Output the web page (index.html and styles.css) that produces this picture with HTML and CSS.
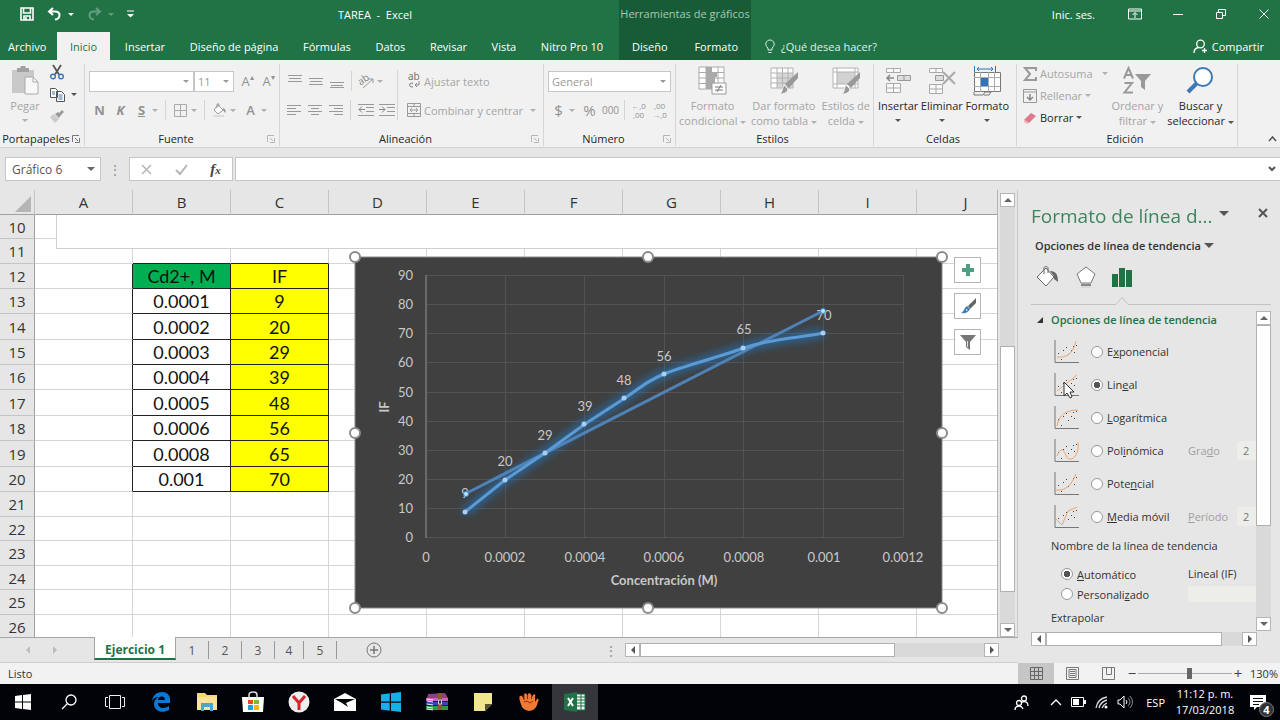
FILE: index.html
```html
<!DOCTYPE html>
<html lang="es">
<head>
<meta charset="utf-8">
<title>TAREA - Excel</title>
<link rel="stylesheet" href="styles.css">
</head>
<body>
<div class="app">

<header class="head">
  <div class="head-main">
    <div class="title-row">
      <button class="qb" aria-label="Guardar"><svg width="14" height="14" viewBox="0 0 14 14"><path d="M1 1h12v12H1zM3.500 1v5h7V1M4 13V9h6v4M6 13v-3" fill="none" stroke="#fff" stroke-width="1.600"/></svg></button>
      <button class="qb undo" aria-label="Deshacer"><svg width="15" height="14" viewBox="0 0 15 14"><path d="M6 1L2 4.500 6 8M2 4.500h6c6 0 6 7 0 8" fill="none" stroke="#fff" stroke-width="2"/></svg><i class="caret"></i></button>
      <button class="qb redo" aria-label="Rehacer"><svg width="15" height="14" viewBox="0 0 15 14"><path d="M9 1l4 3.500L9 8M13 4.500H7c-6 0-6 7 0 8" fill="none" stroke="#fff" stroke-width="2"/></svg><i class="caret"></i></button>
      <button class="qb" aria-label="Personalizar"><svg width="7" height="8" viewBox="0 0 7 8"><path d="M0 1h7" stroke="#fff"/><path d="M0 4h7L3.500 7.500z" fill="#fff"/></svg></button>
      <span class="doc">TAREA &nbsp;-&nbsp; Excel</span>
    </div>
    <nav class="tabs">
      <button>Archivo</button><button class="on">Inicio</button><button>Insertar</button><button>Diseño de página</button><button>Fórmulas</button><button>Datos</button><button>Revisar</button><button>Vista</button><button>Nitro Pro 10</button>
    </nav>
  </div>
  <div class="head-ctx">
    <span class="ctx-title">Herramientas de gráficos</span>
    <nav class="tabs"><button>Diseño</button><button>Formato</button></nav>
  </div>
  <div class="head-end">
    <div class="win">
      <button class="login">Inic. ses.</button>
      <button aria-label="Opciones de cinta"><svg width="14" height="12" viewBox="0 0 14 12"><path d="M.5 1h13v10H.5zM.5 3h13M7 10V5M4.500 7L7 4.500 9.500 7" fill="none" stroke="#fff"/></svg></button>
      <button aria-label="Minimizar"><svg width="10" height="10"><path d="M0 5.500h10" stroke="#fff"/></svg></button>
      <button aria-label="Restaurar"><svg width="10" height="10"><path d="M.5 3.500h6v6h-6zM2.500 3V.5h7v6H7" fill="none" stroke="#fff"/></svg></button>
      <button aria-label="Cerrar"><svg width="10" height="10"><path d="M.5.500l9 9M9.500.500l-9 9" stroke="#fff"/></svg></button>
    </div>
    <div class="tell">
      <button><svg width="10" height="15" viewBox="0 0 10 15"><path d="M3 11V9C-1 6 1 1 5 1s6 5 2 8v2zM3.500 13.500h3" fill="none" stroke="#dff0e5"/></svg>¿Qué desea hacer?</button>
      <button class="share"><svg width="15" height="15" viewBox="0 0 15 15"><circle cx="7.500" cy="5" r="3.800" fill="none" stroke="#fff" stroke-width="1.300"/><path d="M1 14c0-3 2-5 4.500-5.500M11.500 9v5M9 11.500h5" fill="none" stroke="#fff" stroke-width="1.300"/></svg>Compartir</button>
    </div>
  </div>
</header>

<section class="ribbon">
  <div class="group g-clip">
    <div class="body">
      <button class="big dim paste"><svg width="27" height="30" viewBox="0 0 27 30"><path d="M0 4h22v23H0z" fill="#c9c9c9"/><path d="M5 2h3l1-2h4l1 2h3v4H5z" fill="#a2a2a2"/><path d="M13 11h8l5 5v12H13z" fill="#f8f8f8" stroke="#aaa"/><path d="M21 11v5h5" fill="none" stroke="#aaa"/></svg><span>Pegar</span><i class="caret"></i></button>
      <div class="stack">
        <button aria-label="Cortar"><svg width="14" height="15" viewBox="0 0 14 15"><path d="M3 0l6 9.500M11 0L5 9.500" stroke="#555" stroke-width="1.800"/><circle cx="3" cy="11.500" r="2.300" fill="none" stroke="#3b78b5" stroke-width="1.400"/><circle cx="11" cy="11.500" r="2.300" fill="none" stroke="#3b78b5" stroke-width="1.400"/></svg></button>
        <button aria-label="Copiar"><svg width="15" height="14" viewBox="0 0 15 14"><path d="M.5.500h5l2 2v7h-7zM6.500 3.500h5l3 3v7h-8z" fill="#fff" stroke="#555"/><path d="M2 4h3M2 6h3M8.500 7h4M8.500 9h4M8.500 11h4" stroke="#3b78b5"/></svg><i class="caret dark"></i></button>
        <button aria-label="Copiar formato"><svg width="14" height="13" viewBox="0 0 14 13"><path d="M0 7l4-3 5 5-4 4z" fill="#ccc"/><path d="M5 4l3-2 3 3-2 3zM9 3l3-3 2 2-3 3z" fill="#999"/></svg></button>
      </div>
    </div>
    <div class="label"><span>Portapapeles</span><svg class="launch"><use href="#launch"/></svg></div>
  </div>

  <div class="group g-font">
    <div class="body rows">
      <div class="row">
        <span class="sel w-font"><select aria-label="Fuente" disabled><option></option></select></span><span class="sel w-size"><select aria-label="Tamaño" disabled><option>11</option></select></span>
        <button class="ic grow" aria-label="Aumentar tamaño">A<sup>▴</sup></button><button class="ic shrink" aria-label="Disminuir tamaño">A<sup>▾</sup></button>
      </div>
      <div class="row">
        <button class="ic b">N</button><button class="ic b it">K</button><button class="ic b ul">S</button><i class="caret"></i><i class="vs"></i>
        <button class="ic" aria-label="Bordes"><svg width="13" height="13"><path d="M.5.500h12v12H.5zM6.500 0v13M0 6.500h13" fill="none" stroke="#aaa"/></svg></button><i class="caret"></i><i class="vs"></i>
        <button class="ic" aria-label="Relleno"><svg width="15" height="15" viewBox="0 0 15 15"><path d="M6 2l5 5-5 4-4-4zM5 5V1h2v3" fill="#fff" stroke="#999"/><path d="M11 5c3 1 3 3 2 5l-2-3z" fill="#999"/><path d="M1 12h11v2H1z" fill="#ddd"/></svg></button><i class="caret"></i>
        <button class="ic fa">A</button><i class="caret"></i>
      </div>
    </div>
    <div class="label"><span>Fuente</span><svg class="launch soft"><use href="#launch"/></svg></div>
  </div>

  <div class="group g-align">
    <div class="body">
      <div class="rows al">
        <div class="row">
          <button class="ic" aria-label="Arriba"><svg class="i14"><path d="M0 1.500h14M1 4.500h12M0 7.500h14" stroke="#999"/></svg></button><button class="ic" aria-label="Medio"><svg class="i14"><path d="M0 4.500h14M1 7.500h12M0 10.500h14" stroke="#999"/></svg></button><button class="ic" aria-label="Abajo"><svg class="i14"><path d="M0 8.500h14M1 11.500h12M0 13.500h14" stroke="#999"/></svg></button><i class="vs"></i>
          <button class="ic" aria-label="Orientación"><svg width="16" height="15" viewBox="0 0 16 15"><text x="0" y="9" font-size="10" font-family="Noto Sans" fill="#888" transform="rotate(-35 5 8)">ab</text><path d="M4 14L14 5M10 5h4v4" fill="none" stroke="#999"/></svg></button><i class="caret"></i>
        </div>
        <div class="row">
          <button class="ic" aria-label="Izquierda"><svg class="i14"><path d="M0 2.500h14M0 5.500h9M0 8.500h14M0 11.500h9" stroke="#999"/></svg></button><button class="ic" aria-label="Centrar"><svg class="i14"><path d="M0 2.500h14M3 5.500h8M0 8.500h14M3 11.500h8" stroke="#999"/></svg></button><button class="ic" aria-label="Derecha"><svg class="i14"><path d="M0 2.500h14M5 5.500h9M0 8.500h14M5 11.500h9" stroke="#999"/></svg></button><i class="vs"></i>
          <button class="ic" aria-label="Disminuir sangría"><svg width="16" height="14"><path d="M0 1.500h16M8 4.500h8M8 8.500h8M0 12.500h16" stroke="#999"/><path d="M7 6.500H1M4 3.500l-3 3 3 3" fill="none" stroke="#888"/></svg></button><button class="ic" aria-label="Aumentar sangría"><svg width="16" height="14"><path d="M0 1.500h16M8 4.500h8M8 8.500h8M0 12.500h16" stroke="#999"/><path d="M0 6.500h6M3 3.500l3 3-3 3" fill="none" stroke="#888"/></svg></button>
        </div>
      </div>
      <i class="vs tall"></i>
      <div class="rows wrapcol">
        <div class="row"><button class="txt"><svg width="14" height="16" viewBox="0 0 14 16"><text x="1" y="7" font-size="10" font-family="Noto Sans" fill="#777">ab</text><path d="M6 10.500c-4-2-5 4 0 3.500" fill="none" stroke="#777"/><path d="M12 8v4H8M10 10l-2 2 2 2" fill="none" stroke="#888"/></svg>Ajustar texto</button></div>
        <div class="row"><button class="txt"><svg width="14" height="14"><path d="M.5.500h13v13H.5zM0 3.500h14M0 10.500h14M7 0v3M7 11v3M3 7h8M5 5L3 7l2 2M9 5l2 2-2 2" fill="none" stroke="#999"/></svg>Combinar y centrar<i class="caret"></i></button></div>
      </div>
    </div>
    <div class="label"><span>Alineación</span><svg class="launch soft"><use href="#launch"/></svg></div>
  </div>

  <div class="group g-num">
    <div class="body rows">
      <div class="row"><span class="sel w-num"><select aria-label="Formato de número" disabled><option>General</option></select></span></div>
      <div class="row">
        <button class="ic sym">$</button><i class="caret"></i><button class="ic sym pc">%</button><button class="ic mil">000</button><i class="vs"></i>
        <button class="ic dec" aria-label="Aumentar decimales"><span>←,0</span><span>,00</span></button><button class="ic dec" aria-label="Disminuir decimales"><span>,00</span><span>→,0</span></button>
      </div>
    </div>
    <div class="label"><span>Número</span><svg class="launch soft"><use href="#launch"/></svg></div>
  </div>

  <div class="group g-style">
    <div class="body">
      <button class="big dim"><svg width="30" height="30" viewBox="0 0 30 30"><path d="M1 1h25v22H1z" fill="#fff"/><path d="M8 1h5v22H8zM13 6h6v5h-6zM13 11h4v6h-4z" fill="#aaa"/><path d="M1 1h25v22H1zM1 6.500h25M1 12h25M1 17.500h25M8 1v22M13.500 1v22M20 1v22" fill="none" stroke="#aaa"/><path d="M14 17h14v11H14z" fill="#fff" stroke="#999"/><path d="M17 21h8M17 24h8M23 19l-4 7" stroke="#777"/></svg><span>Formato<br>condicional <i class="caret"></i></span></button>
      <button class="big dim"><svg width="30" height="30" viewBox="0 0 30 30"><path d="M2 2h22v20H2z" fill="#fff"/><path d="M8 7h16v15H8z" fill="#d6d6d6"/><path d="M2 2h22v20H2zM2 7h22M2 12h22M2 17h22M8 2v20M13.500 2v20M19 2v20" fill="none" stroke="#b2b2b2"/><path d="M29 6v6l-9 10-4-4z" fill="#999"/><path d="M15 19l4 4c-1 4-4 5-8 5 3-2 2-7 4-9z" fill="#999" stroke="#f1f1f1"/></svg><span>Dar formato<br>como tabla <i class="caret"></i></span></button>
      <button class="big dim"><svg width="30" height="30" viewBox="0 0 30 30"><path d="M2 2h25v20H2z" fill="#fff"/><path d="M6 6h18v12H6z" fill="#d2d2d2"/><path d="M2 2h25v20H2zM2 6h25M2 18h25M6 2v20M24 2v20" fill="none" stroke="#b2b2b2"/><path d="M29 6v6l-9 10-4-4z" fill="#999"/><path d="M15 19l4 4c-1 4-4 5-8 5 3-2 2-7 4-9z" fill="#999" stroke="#f1f1f1"/></svg><span>Estilos de<br>celda <i class="caret"></i></span></button>
    </div>
    <div class="label"><span>Estilos</span></div>
  </div>

  <div class="group g-cell">
    <div class="body">
      <button class="big"><svg width="28" height="30" viewBox="0 0 28 30"><path d="M2.500 2.500h14v4h-14zM9.500 2v5M2.500 17.500h14v9h-14zM9.500 17v9M2 22h15" fill="#f8f8f8" stroke="#aaa"/><path d="M13.500 9.500h13v5h-13zM20 9v6" fill="#ddd" stroke="#999"/><path d="M10 12H3M6 9l-3 3 3 3" fill="none" stroke="#888" stroke-width="1.500"/></svg><span>Insertar</span><i class="caret dark"></i></button>
      <button class="big"><svg width="28" height="30" viewBox="0 0 28 30"><path d="M1.500 2.500h13v4h-13zM8 2v5M1.500 18.500h13v9h-13zM8 18v9M1 23h14" fill="#f8f8f8" stroke="#aaa"/><path d="M7.500 9.500h8v5h-8z" fill="#ddd" stroke="#999"/><path d="M15 6l12 12M27 6L15 18" stroke="#aaa" stroke-width="2"/></svg><span>Eliminar</span><i class="caret dark"></i></button>
      <button class="big"><svg width="28" height="30" viewBox="0 0 28 30"><path d="M1.500 6.500h26v19h-26z" fill="#fff" stroke="#777"/><path d="M1 11.500h26M1 20.500h26M7.500 6v20M15.500 6v20M21.500 6v20" stroke="#aaa"/><path d="M8 12h7v8H8z" fill="#2f75b8"/><path d="M1 26v3h9l2-3h6l-2 3h-5" fill="none" stroke="#777"/><path d="M1.500 0v6M22.500 0v6M4 3h16M6 1L4 3l2 2M18 1l2 2-2 2" fill="none" stroke="#2f75b8"/></svg><span>Formato</span><i class="caret dark"></i></button>
    </div>
    <div class="label"><span>Celdas</span></div>
  </div>

  <div class="group g-edit">
    <div class="body">
      <div class="edits">
        <button class="txt"><svg width="14" height="14"><path d="M13 4V1H2l5 6-5 6h11v-3" fill="none" stroke="#999" stroke-width="2"/></svg>Autosuma<i class="caret far"></i></button>
        <button class="txt"><svg width="14" height="14"><path d="M.5.500h13v13H.5zM0 3h14" fill="none" stroke="#999"/><path d="M7 5v6M4 8l3 3 3-3" fill="none" stroke="#888" stroke-width="1.500"/></svg>Rellenar<i class="caret"></i></button>
        <button class="txt live"><svg width="14" height="14"><path d="M1 9l7-7 5 3-7 7z" fill="#e0788c"/><path d="M1 9l5 3-2 1-3-2z" fill="#f4b6c2"/></svg>Borrar<i class="caret dark"></i></button>
      </div>
      <button class="big dim"><svg width="28" height="30" viewBox="0 0 28 30"><path d="M1 12.500L5.500 2 10 12.500M2.500 9h6M1.500 17h7.500L1.500 26.500H10" fill="none" stroke="#999" stroke-width="2"/><path d="M12 8h16l-6 7v9l-4-3v-6z" fill="#999"/></svg><span>Ordenar y<br>filtrar <i class="caret"></i></span></button>
      <button class="big"><svg width="28" height="30" viewBox="0 0 28 30"><circle cx="17" cy="11" r="9" fill="#fff" stroke="#3b78b5" stroke-width="2"/><path d="M11 17L2 26" stroke="#3b78b5" stroke-width="4"/></svg><span>Buscar y<br>seleccionar <i class="caret dark"></i></span></button>
    </div>
    <div class="label"><span>Edición</span></div>
  </div>
  <button class="collapse" aria-label="Contraer"><svg width="9" height="6"><path d="M1 5l3.500-4L8 5" fill="none" stroke="#555" stroke-width="1.500"/></svg></button>
</section>

<section class="fbar">
  <span class="sel namebox"><input aria-label="Cuadro de nombres" value="Gráfico 6"></span>
  <i class="dots">⋮</i>
  <div class="fx">
    <button aria-label="Cancelar"><svg width="11" height="11"><path d="M1 1l9 9M10 1l-9 9" stroke="#b5b5b5" stroke-width="1.500"/></svg></button>
    <button aria-label="Introducir"><svg width="13" height="11"><path d="M1 6l4 4 7-9" fill="none" stroke="#b5b5b5" stroke-width="2"/></svg></button>
    <button class="fxb"><em>f</em><small>x</small></button>
  </div>
  <div class="fin"><input aria-label="Barra de fórmulas"><svg width="8" height="6"><path d="M1 1l3 3 3-3" fill="none" stroke="#555" stroke-width="2"/></svg></div>
</section>

<main class="work">
  <div class="left">
    <div class="sheetwrap">
      <div class="sheet">
        <table>
          <colgroup><col class="c0"><col><col><col><col><col><col><col><col><col><col></colgroup>
          <thead><tr><th class="corner"><svg width="16" height="16"><path d="M16 0v16H0z" fill="#b5b5b5"/></svg></th><th>A<th>B<th>C<th>D<th>E<th>F<th>G<th>H<th>I<th>J</tr></thead>
          <tbody>
          <tr class="r24"><th>10<td><td><td><td><td><td><td><td><td><td></tr>
          <tr class="r25"><th>11<td><td class="ub"><td class="ub"><td><td><td><td><td><td><td></tr>
          <tr class="r25"><th>12<td class="rb"><td class="k g">Cd2+, M<td class="k y">IF<td><td><td><td><td><td><td></tr>
          <tr class="r25"><th>13<td class="rb"><td class="k">0.0001<td class="k y">9<td><td><td><td><td><td><td></tr>
          <tr class="r26"><th>14<td class="rb"><td class="k">0.0002<td class="k y">20<td><td><td><td><td><td><td></tr>
          <tr class="r25"><th>15<td class="rb"><td class="k">0.0003<td class="k y">29<td><td><td><td><td><td><td></tr>
          <tr class="r25"><th>16<td class="rb"><td class="k">0.0004<td class="k y">39<td><td><td><td><td><td><td></tr>
          <tr class="r26"><th>17<td class="rb"><td class="k">0.0005<td class="k y">48<td><td><td><td><td><td><td></tr>
          <tr class="r25"><th>18<td class="rb"><td class="k">0.0006<td class="k y">56<td><td><td><td><td><td><td></tr>
          <tr class="r26"><th>19<td class="rb"><td class="k">0.0008<td class="k y">65<td><td><td><td><td><td><td></tr>
          <tr class="r25"><th>20<td class="rb"><td class="k">0.001<td class="k y">70<td><td><td><td><td><td><td></tr>
          <tr class="r25"><th>21<td><td><td><td><td><td><td><td><td><td></tr>
          <tr class="r24"><th>22<td><td><td><td><td><td><td><td><td><td></tr>
          <tr class="r25"><th>23<td><td><td><td><td><td><td><td><td><td></tr>
          <tr class="r24"><th>24<td><td><td><td><td><td><td><td><td><td></tr>
          <tr class="r25"><th>25<td><td><td><td><td><td><td><td><td><td></tr>
          <tr class="r24"><th>26<td><td><td><td><td><td><td><td><td><td></tr>
          </tbody>
        </table>
        <div class="upper-object"></div>
        <svg class="chart" viewBox="355 257 587 351" role="img" aria-label="Gráfico 6">
          <defs><filter id="glow" x="-20%" y="-20%" width="140%" height="140%"><feGaussianBlur stdDeviation="4"/></filter></defs>
          <rect x="355" y="257" width="587" height="351" fill="#404040" stroke="#8a8a8a"/>
          <path d="M426 275.500h477M426 304.500h477M426 333.500h477M426 362.500h477M426 392.500h477M426 421.500h477M426 450.500h477M426 479.500h477M426 508.500h477M426 537.500h477M505.500 275v262M584.500 275v262M664.500 275v262M743.500 275v262M823.500 275v262M903.500 275v262" stroke="#535353" fill="none"/>
          <path d="M426 275v263" stroke="#6a6a6a" stroke-width="2"/>
          <g class="axis" text-anchor="end"><text x="413" y="280">90</text><text x="413" y="309">80</text><text x="413" y="338">70</text><text x="413" y="367">60</text><text x="413" y="397">50</text><text x="413" y="426">40</text><text x="413" y="455">30</text><text x="413" y="484">20</text><text x="413" y="513">10</text><text x="413" y="542">0</text></g>
          <g class="axis" text-anchor="middle"><text x="426" y="562">0</text><text x="505" y="562">0.0002</text><text x="585" y="562">0.0004</text><text x="664" y="562">0.0006</text><text x="744" y="562">0.0008</text><text x="824" y="562">0.001</text><text x="903" y="562">0.0012</text>
          <text class="ttl" x="664" y="585">Concentración (M)</text><text class="ttl" transform="translate(389 407) rotate(-90)">IF</text></g>
          <path d="M465 512L505 480L545 453L585 424L625 398C645 384 650 380 664 374S715 358 744 348S800 338 823 333" fill="none" stroke="#1f7fd6" stroke-width="8" filter="url(#glow)" opacity=".65"/>
          <g class="axis" text-anchor="middle"><text x="465" y="498">9</text><text x="505" y="466">20</text><text x="545" y="440">29</text><text x="585" y="411">39</text><text x="624" y="385">48</text><text x="664" y="361">56</text><text x="744" y="334">65</text><text x="824" y="320">70</text></g>
          <path d="M465 494L823 311" stroke="#4f83b8" stroke-width="3"/>
          <path d="M465 512L505 480L545 453L585 424L625 398C645 384 650 380 664 374S715 358 744 348S800 338 823 333" fill="none" stroke="#5b9bd5" stroke-width="3"/>
          <g fill="#a5cff5"><circle cx="465" cy="512" r="2.500"/><circle cx="505" cy="480" r="2.500"/><circle cx="545" cy="453" r="2.500"/><circle cx="584" cy="424" r="2.500"/><circle cx="624" cy="398" r="2.500"/><circle cx="664" cy="374" r="2.500"/><circle cx="743" cy="348" r="2.500"/><circle cx="823" cy="333" r="2.500"/></g>
          <g fill="#bfe2ff" stroke="#2f8fdf"><circle cx="466" cy="494" r="2.500"/><circle cx="823" cy="311" r="2.500"/></g>
          <g fill="#fff" stroke="#8b8b8b" stroke-width="2"><circle cx="355" cy="257" r="5"/><circle cx="648" cy="257" r="5"/><circle cx="942" cy="257" r="5"/><circle cx="355" cy="433" r="5"/><circle cx="942" cy="433" r="5"/><circle cx="355" cy="608" r="5"/><circle cx="648" cy="608" r="5"/><circle cx="942" cy="608" r="5"/></g>
        </svg>
        <div class="ctools">
          <button aria-label="Elementos"><svg width="14" height="14"><path d="M7 1v12M1 7h12" stroke="#4fa083" stroke-width="4"/></svg></button>
          <button aria-label="Estilos"><svg width="18" height="18"><path d="M17 1v5l-6 6-2-3z" fill="#666"/><path d="M8 9l3 3c-2 4-6 5-9 4 3-1 3-5 6-7z" fill="#3b78b5"/><path d="M7 12l2 1-2 1z" fill="#fff"/></svg></button>
          <button aria-label="Filtros"><svg width="18" height="18"><path d="M1 2h16l-6 7v8l-4-3V9z" fill="#777"/><path d="M8.500 8v6" stroke="#ddd"/></svg></button>
        </div>
      </div>
      <div class="vsb"><button aria-label="Subir"><i class="tri up"></i></button><div class="track"><i class="thumb vt1"></i></div><button aria-label="Bajar"><i class="tri down"></i></button></div>
    </div>
    <div class="sheettabs">
      <button class="nav" aria-label="Hoja anterior"><i class="tri lf pale"></i></button><button class="nav" aria-label="Hoja siguiente"><i class="tri rt pale"></i></button>
      <button class="tab cur">Ejercicio 1</button><button class="tab">1</button><button class="tab">2</button><button class="tab">3</button><button class="tab narrow">4</button><button class="tab">5</button>
      <button class="add" aria-label="Hoja nueva"><svg width="16" height="16"><circle cx="8" cy="8" r="7" fill="none" stroke="#777"/><path d="M8 4v8M4 8h8" stroke="#777" stroke-width="1.500"/></svg></button>
      <i class="dots split">⋮</i>
      <div class="hsb"><button aria-label="Izquierda"><i class="tri lf"></i></button><div class="track"><i class="thumb ht1"></i></div><button aria-label="Derecha"><i class="tri rt"></i></button></div>
    </div>
  </div>

  <aside class="pane">
    <div class="ptitle"><h2>Formato de línea d...</h2><button aria-label="Menú"><i class="caret dark xl"></i></button><button class="px" aria-label="Cerrar panel"><svg width="10" height="10"><path d="M1 1l8 8M9 1L1 9" stroke="#555" stroke-width="2"/></svg></button></div>
    <button class="psub">Opciones de línea de tendencia <i class="caret dark xl"></i></button>
    <div class="picons">
      <button aria-label="Relleno y línea"><svg width="24" height="22" viewBox="0 0 24 22"><path d="M10 2l8 9-8 9-9-9z" fill="#fff" stroke="#666"/><path d="M8 8V2c0-2 4-2 4 0v5" fill="none" stroke="#666"/><path d="M14 5c7 0 8 5 8 11l-4-3v-3z" fill="#666"/></svg></button>
      <button aria-label="Efectos"><svg width="22" height="22" viewBox="0 0 22 22"><path d="M11 1l9 7-4 9H6L2 8z" fill="#fff" stroke="#777"/><path d="M6 19h10" stroke="#888" stroke-width="2"/><path d="M6 21h10" stroke="#ccc"/></svg></button>
      <button aria-label="Opciones"><svg width="20" height="20"><path d="M0 7h6v13H0zM7 1h6v19H7zM14 3h6v17h-6z" fill="#217346"/></svg></button>
    </div>
    <svg class="notch" viewBox="0 0 240 8" preserveAspectRatio="xMinYMin slice"><path d="M0 7.500h85l6-7 6 7h143" fill="none" stroke="#c3c3c3"/></svg>
    <div class="pbody">
      <form class="opts">
        <h3><i class="fold"></i>Opciones de línea de tendencia</h3>
        <div class="opt"><svg><use href="#axes"/><path d="M3 17c9 1 16-3 19-16" class="cv"/></svg><label><input type="radio" name="t"><span>E<u>x</u>ponencial</span></label></div>
        <div class="opt"><svg><use href="#axes"/><path d="M3 18L23 2" class="cv"/></svg><label><input type="radio" name="t" checked><span>Lin<u>e</u>al</span></label>
          <svg class="cursor" width="12" height="18"><path d="M1 1v14l3-3 3 5 2-1-2-5h4z" fill="#fff" stroke="#333"/></svg></div>
        <div class="opt"><svg><use href="#axes"/><path d="M3 20C5 9 12 4 24 4" class="cv"/></svg><label><input type="radio" name="t"><span><u>L</u>ogarítmica</span></label></div>
        <div class="opt"><svg><use href="#axes"/><path d="M3 17c3-8 7-8 9 0 3 7 14 2 12-14" class="cv"/></svg><label><input type="radio" name="t"><span>Pol<u>i</u>nómica</span></label><label class="deg"><span>Gra<u>d</u>o</span> <input value="2" disabled></label></div>
        <div class="opt"><svg><use href="#axes"/><path d="M2 18c9 1 15-4 20-16" class="cv"/></svg><label><input type="radio" name="t"><span>Pote<u>n</u>cial</span></label></div>
        <div class="opt"><svg><use href="#axes"/><path d="M2 14l6 6 6-14 9-4" class="cv"/></svg><label><input type="radio" name="t"><span><u>M</u>edia móvil</span></label><label class="deg"><span><u>P</u>eríodo</span> <input value="2" disabled></label></div>
        <p class="nm">Nombre de la línea de tendencia</p>
        <div class="opt2"><label><input type="radio" name="n" checked><span><u>A</u>utomático</span></label><span class="val">Lineal (IF)</span></div>
        <div class="opt2"><label><input type="radio" name="n"><span>Personali<u>z</u>ado</span></label><input class="val" aria-label="Nombre" disabled></div>
        <p class="ex">Extrapolar</p>
      </form>
      <div class="vsb pv"><button aria-label="Subir"><i class="tri up"></i></button><div class="track"><i class="thumb vt2"></i></div><button aria-label="Bajar"><i class="tri down"></i></button></div>
    </div>
    <div class="hsb ph"><button aria-label="Izquierda"><i class="tri lf"></i></button><div class="track"><i class="thumb ht2"></i></div><button aria-label="Derecha"><i class="tri rt"></i></button></div>
  </aside>
</main>

<footer class="status">
  <span class="ready">Listo</span>
  <button class="view on" aria-label="Normal"><svg width="13" height="13"><path d="M.5.500h12v12H.5zM4.500 0v13M8.500 0v13M0 4.500h13M0 8.500h13" fill="none" stroke="#666"/></svg></button>
  <button class="view" aria-label="Diseño"><svg width="13" height="13"><path d="M.5.500h12v12H.5zM3 2.500h7v8H3zM4 4.500h5M4 6.500h5M4 8.500h5" fill="none" stroke="#777"/></svg></button>
  <button class="view" aria-label="Saltos"><svg width="13" height="13"><path d="M.5.500h12v12H.5zM4.500 0v7.500h5V0" fill="none" stroke="#777"/></svg></button>
  <button class="zb">−</button><input class="zoom" type="range" min="0" max="100" value="55" aria-label="Zoom"><button class="zb">+</button><span class="pct">130%</span>
</footer>

<div class="taskbar">
  <button aria-label="Inicio"><svg width="16" height="16" viewBox="0 0 16 16"><path d="M0 2l7-1v6.500H0zM8 1l8-1v7.500H8zM0 8.500h7V15l-7-1zM8 8.500h8V16l-8-1z" fill="#fff"/></svg></button>
  <button aria-label="Buscar"><svg width="16" height="16"><circle cx="10" cy="6" r="5" fill="none" stroke="#fff" stroke-width="1.300"/><path d="M6.500 9.500L1 15" stroke="#fff" stroke-width="1.300"/></svg></button>
  <button aria-label="Vista de tareas"><svg width="20" height="16"><path d="M4.500 1.500h11v13h-11zM3 3.500H.5v9H3M17 3.500h2.500v9H17" fill="none" stroke="#eee"/></svg></button>
  <button aria-label="Edge"><svg width="20" height="20" viewBox="0 0 20 20"><path d="M1 9C2 3 6 0 11 0c6 0 9 4 8 11H7c0 6 7 6 11 3v4c-7 4-15 1-15-6 0-3 2-6 5-7-4 0-6 2-7 4zm6-1h7c0-5-7-4-7 0z" fill="#0a78d4"/></svg></button>
  <button aria-label="Explorador"><svg width="22" height="20" viewBox="0 0 22 20"><path d="M1 1h8l2 2h10v15H1z" fill="#f8d775"/><path d="M1 5h20v13H1z" fill="#fbe39a"/><path d="M5 19v-8h12v8h-3v-4H8v4z" fill="#4aa8c9"/></svg></button>
  <button aria-label="Tienda"><svg width="22" height="22" viewBox="0 0 22 22"><path d="M0 6h22l-1 15H1z" fill="#fff"/><path d="M7 8V4c0-4 8-4 8 0v4" fill="none" stroke="#ddd" stroke-width="1.500"/><path d="M6 9h5v4H6z" fill="#e64a25"/><path d="M12 9h5v4h-5z" fill="#7db928"/><path d="M6 14h5v5H6z" fill="#1d9fe0"/><path d="M12 14h5v5h-5z" fill="#fbb316"/></svg></button>
  <button aria-label="Yandex"><svg width="22" height="22"><circle cx="11" cy="11" r="10.500" fill="#eee"/><path d="M5 5l6 7 6-7M11 11v8" fill="none" stroke="#d8232a" stroke-width="3"/></svg></button>
  <button aria-label="Correo"><svg width="24" height="20" viewBox="0 0 24 20"><path d="M1 7l11-6 11 6v12H1z" fill="#fff"/><path d="M2 7h20l-9 4 2 4-6-4z" fill="#000"/></svg></button>
  <button aria-label="Windows"><svg width="20" height="20" viewBox="0 0 16 16"><path d="M0 2l7-1v6.500H0zM8 1l8-1v7.500H8zM0 8.500h7V15l-7-1zM8 8.500h8V16l-8-1z" fill="#13b1e7"/></svg></button>
  <button aria-label="WinRAR"><svg width="22" height="18" viewBox="0 0 22 18"><path d="M2 1l17-1 3 5H1z" fill="#8a4283"/><path d="M0 5h22v3H0z" fill="#d25fb8"/><path d="M0 8h22v1H0z" fill="#222"/><path d="M0 9h22v3H0z" fill="#3348b0"/><path d="M0 12h22v1H0z" fill="#222"/><path d="M0 13h22v4H0z" fill="#2f9a45"/><path d="M1 6l6 1M1 8l6 1M1 11l6 1M1 14l6 1M1 16l6 1" stroke="#eee"/><path d="M12 0h4v17h-4z" fill="#8b5a33"/><path d="M12.500 7h3v4h-3z" fill="#333" stroke="#ccc"/></svg></button>
  <button aria-label="Notas"><svg width="18" height="18"><path d="M0 0h18v11l-7 7H0z" fill="#f0e68c"/><path d="M11 18v-7h7z" fill="#55532e"/></svg></button>
  <button aria-label="Garra"><svg width="20" height="18" viewBox="0 0 20 18"><path d="M1 3c2-1 3 1 4 4V2c0-2 3-2 3 0v4l1-5c1-1 3-1 3 1v4l2-4c2-2 3 0 2 2v5l2-3c3-1 1 3 0 6-3 8-12 7-15 2-1-3-4-10-2-11z" fill="#ee7a35"/><path d="M5 9l3-1 3 2 3-2M5 2v5M8.500 2v4M12.500 2v4" fill="none" stroke="#8a330b"/></svg></button>
  <button class="act" aria-label="Excel"><svg width="22" height="20" viewBox="0 0 22 20"><path d="M12 2h9v16h-9z" fill="#f3f7f4" stroke="#217346"/><path d="M12 5h9M12 8h9M12 11h9M12 14h9M17 2v16" stroke="#217346"/><path d="M0 2l13-2v20L0 18z" fill="#217346"/><path d="M4 6l5 8M9 6l-5 8" stroke="#fff" stroke-width="2"/></svg></button>
  <div class="tray">
    <svg class="people" width="15" height="15" viewBox="0 0 15 15"><g fill="none" stroke="#fff" stroke-width="1.300"><circle cx="10" cy="3.500" r="2.500"/><circle cx="5" cy="8" r="2.500"/><path d="M1 15c0-3 1-4 4-4s3 1 4 3M8 7c4-1 6 0 6 4"/></g></svg>
    <svg width="12" height="8"><path d="M1 7l5-5 5 5" fill="none" stroke="#fff" stroke-width="1.300"/></svg>
    <svg width="15" height="10"><path d="M.5.500h12v9H.5z" fill="none" stroke="#fff"/><path d="M2 2h6v6H2zM13 3h2v4h-2z" fill="#fff"/></svg>
    <svg width="13" height="13"><path d="M1 12C2 6 6 2 12 1M4 12c1-4 4-7 8-8M7 12c1-2 2-4 5-5" fill="none" stroke="#ddd" stroke-width="1.300"/><circle cx="11" cy="11" r="1.500" fill="#fff"/></svg>
    <svg width="17" height="14"><path d="M1 5h2l4-4v12L3 9H1zM9 5q2 2 0 4" fill="none" stroke="#fff"/><path d="M11 3q4 4 0 8M13 1q5 6 0 12" fill="none" stroke="#888"/></svg>
    <span class="lang">ESP</span>
    <span class="clock">11:12 p. m.<br>17/03/2018</span>
    <button class="note" aria-label="Notificaciones"><svg width="16" height="15"><path d="M0 0h16v12H7l-3 3v-3H0z" fill="#fff"/><path d="M3 3.500h10M3 6.500h10M3 9.500h6" stroke="#111"/></svg><b>4</b></button>
  </div>
</div>
</div>

<svg class="defs"><defs>
  <symbol id="launch" viewBox="0 0 8 8"><path d="M.5 7V.5H7M3 3l3 3M7.500 3v4.500H3" fill="none" stroke="currentColor"/></symbol>
  <symbol id="axes" viewBox="0 0 26 23"><path d="M1 0v22.500h24" fill="none" stroke="#777"/><path d="M4 13h1v1H4zM9 10h1v1H9zM14 14h1v1h-1zM19 6h1v1h-1zM17 10h1v1h-1zM7 19h1v1H7zM22 5h1v1h-1zM12 7h1v1h-1zM20 12h1v1h-1z" fill="#444"/></symbol>
</defs></svg>
</body>
</html>
```

FILE: styles.css
```css
* { box-sizing: border-box; }
body { margin: 0; font: 11px/15px "Open Sans", "Noto Sans", sans-serif; color: #262626; background: #e6e6e6; }
button { border: 0; padding: 0; margin: 0; background: none; font: inherit; color: inherit; display: inline-flex; align-items: center; justify-content: center; white-space: nowrap; }
input, select { font: inherit; color: inherit; border: 0; margin: 0; min-width: 0; }
svg { display: block; flex: none; overflow: visible; }
i { font-style: normal; }
.defs { position: absolute; width: 0; height: 0; }
.app { display: flex; flex-direction: column; height: 100vh; min-width: 1200px; overflow: hidden; }

.caret { display: inline-block; flex: none; border: 3px solid transparent; border-top-color: #b0b0b0; border-bottom: 0; vertical-align: middle; }
.caret.dark { border-top-color: #555; }
.caret.xl { border-width: 5px; border-bottom: 0; }
.tri { border: 4px solid transparent; }
.tri.up { border-bottom-color: #666; border-top: 0; }
.tri.down { border-top-color: #666; border-bottom: 0; }
.tri.lf { border-right-color: #555; border-left: 0; }
.tri.rt { border-left-color: #555; border-right: 0; }
.tri.lf.pale { border-right-color: #bdbdbd; }
.tri.rt.pale { border-left-color: #bdbdbd; }

/* Title bar and ribbon tabs */
.head { display: flex; height: 60px; flex: none; background: #217346; color: #fff; }
.head-main { flex: 0 0 619px; display: flex; flex-direction: column; }
.title-row { height: 32px; display: flex; align-items: center; padding: 0 0 4px 20px; gap: 13px; }
.qb { gap: 6px; }
.qb .caret { border-top-color: #fff; }
.redo { opacity: .3; }
.doc { flex: 1; text-align: center; padding-right: 16px; }
.tabs { height: 28px; display: flex; justify-content: space-between; padding-right: 6px; }
.tabs button { padding: 0 10px; }
.tabs button.on { padding: 0 13px; }
.head-main .tabs button:first-child { padding: 0 6px 0 8px; }
.tabs .on { background: #f1f1f1; color: #217346; }
.head-ctx { flex: 0 0 132px; background: #185c37; display: flex; flex-direction: column; }
.ctx-title { height: 32px; line-height: 28px; text-align: center; color: #a3cbb2; white-space: nowrap; }
.head-ctx .tabs { padding: 0; }
.head-ctx .tabs button { padding: 0 13px; }
.head-end { flex: 1; }
.win { height: 32px; padding-bottom: 4px; display: flex; justify-content: flex-end; align-items: center; }
.win button { width: 43px; height: 24px; }
.win .login { width: auto; margin-right: 18px; }
.win button:last-child { margin-right: -5px; }
.tell { height: 28px; padding: 0 16px 0 14px; display: flex; justify-content: space-between; color: #dff0e5; }
.tell button { gap: 6px; }
.tell .share { gap: 4px; color: #fff; }

/* Ribbon */
.ribbon { display: flex; flex: none; height: 88px; background: #f1f1f1; border-bottom: 1px solid #d0d0d0; padding-top: 4px; }
.group { flex: none; display: flex; flex-direction: column; height: 82px; border-right: 1px solid #d6d6d6; color: #262626; }
.g-clip { width: 85px; } .g-font { width: 195px; } .g-align { width: 264px; } .g-num { width: 132px; } .g-style { width: 198px; } .g-cell { width: 143px; } .g-edit { width: 221px; }
.body { flex: 1; display: flex; min-height: 0; }
.rows { display: flex; flex-direction: column; gap: 7px; padding-top: 6px; }
.row { display: flex; align-items: center; height: 22px; }
.label { height: 15px; display: flex; align-items: center; padding: 0 4px 0 0; }
.label span { flex: 1; text-align: center; }
.launch { width: 8px; height: 8px; color: #777; }
.launch.soft { color: #b5b5b5; }
.big { flex-direction: column; justify-content: flex-start; padding-top: 2px; }
.big span { margin-top: 2px; }
.big > .caret { margin-top: 6px; }
.dim { color: #a5a5a5; }
.paste { width: 50px; }
.stack { display: flex; flex-direction: column; gap: 7px; padding-top: 1px; align-items: flex-start; }
.stack button { gap: 6px; height: 15px; }
.ic { width: 21px; height: 22px; color: #929292; }
.vs { width: 1px; height: 20px; background: #d4d4d4; flex: none; }
.vs.tall { height: 50px; margin-top: 6px; }
.i14 { width: 14px; height: 14px; }
.sel { position: relative; display: inline-flex; background: #fff; border: 1px solid #c6c6c6; height: 21px; }
.sel::after { content: ""; position: absolute; right: 4px; top: 8px; border: 3px solid transparent; border-top-color: #999; border-bottom: 0; }
.sel select, .sel input { appearance: none; width: 100%; background: none; padding: 0 3px; color: #999; opacity: 1; }
.w-font { width: 105px; } .w-size { width: 40px; } .w-num { width: 123px; }
.g-font .rows, .g-num .rows { padding-left: 4px; }
.g-font .ic { font-size: 13px; }
.g-font .ic sup { font-size: 8px; line-height: 8px; margin-bottom: 8px; }
.grow { margin-left: 3px; }
.g-font .b { font-weight: 700; } .it { font-style: italic; } .ul { text-decoration: underline; }
.g-font .row .vs { margin: 0 4px 0 7px; }
.g-font .fa { margin-left: 4px; font-weight: 600; }
.al { width: 117px; padding-left: 4px; }
.al .vs { margin: 0 4px; }
.wrapcol { padding-left: 9px; }
.txt { color: #a5a5a5; gap: 3px; }
.txt .caret { margin-left: 4px; }
.sym { font-size: 15px; }
.pc { margin-left: 4px; }
.mil { font-size: 10px; }
.g-num .row .vs { margin: 0 3px; }
.dec { flex-direction: column; font-size: 8px; line-height: 9px; }
.g-style .body { padding: 0 3px; justify-content: space-between; }
.g-cell .body { padding: 0 7px 0 4px; justify-content: space-between; }
.g-edit .body { gap: 4px; padding: 0 7px 0 6px; justify-content: space-between; }
.edits { display: flex; flex-direction: column; align-items: flex-start; gap: 7px; padding-top: 2px; }
.edits .txt { height: 15px; }
.edits .txt .caret { margin-left: 0; }
.edits .live { color: #262626; }
.edits .txt .far { margin-left: 6px; }
.collapse { margin: auto 3px 5px auto; }

/* Formula bar */
.fbar { display: flex; align-items: center; flex: none; height: 42px; padding-left: 5px; background: #e6e6e6; }
.namebox { width: 96px; height: 24px; font-size: 12px; }
.namebox input { color: #555; padding-left: 6px; }
.namebox::after { right: 5px; top: 9px; border-width: 4px; border-bottom: 0; border-top-color: #666; }
.dots { width: 28px; text-align: center; color: #999; font-size: 14px; }
.fx { width: 104px; height: 24px; background: #fff; border: 1px solid #c6c6c6; display: flex; justify-content: space-around; margin-right: 2px; }
.fxb { font-family: "Liberation Serif", serif; font-size: 15px; color: #444; }
.fxb em { font-weight: 700; }
.fxb small { font-size: 11px; font-style: italic; font-weight: 700; padding-top: 3px; }
.fin { flex: 1; height: 24px; background: #fff; border: 1px solid #c6c6c6; border-right: 0; display: flex; align-items: center; padding-right: 4px; }
.fin input { flex: 1; background: none; }

/* Work area */
.work { flex: 1; display: flex; min-height: 0; }
.left { flex: 1; min-width: 0; display: flex; flex-direction: column; }
.sheetwrap { flex: 1; display: flex; min-height: 0; }
.sheet { flex: 1; position: relative; overflow: hidden; background: #fff; border-right: 1px solid #b5b5b5; }
table { table-layout: fixed; width: 1015px; border-collapse: separate; border-spacing: 0; font: 18px/20px Lato, "Open Sans", sans-serif; color: #111; }
col { width: 98px; }
.c0 { width: 35px; }
th { background: #e6e6e6; font: 15px/20px "Open Sans", sans-serif; color: #333; padding: 0; border-right: 1px solid #c4c4c4; border-bottom: 1px solid #c4c4c4; }
thead tr { height: 25px; }
thead th { border-bottom-color: #a0a0a0; }
tbody th { border-right-color: #a0a0a0; }
.corner svg { margin: 3px 3px 0 auto; }
td { padding: 0; text-align: center; border-right: 1px solid #d6d6d6; border-bottom: 1px solid #d6d6d6; line-height: 18px; }
.r24 { height: 24px; } .r25 { height: 25px; } .r26 { height: 26px; }
.k { border-color: #222; }
.rb { border-right-color: #222; }
.ub { border-bottom-color: #222; }
.g { background: #00b050; }
.y { background: #ff0; }
.upper-object { position: absolute; left: 56px; top: 25px; right: 0; height: 34px; background: #fff; border: 1px solid #cfcfcf; border-width: 0 0 1px 1px; }
.chart { position: absolute; left: 355px; top: 67px; width: 587px; height: 351px; }
.axis { font: 13px Lato, "Open Sans", sans-serif; fill: #c8c8c8; }
.ttl { font-weight: 700; }
.ctools { position: absolute; left: 954px; top: 67px; display: flex; flex-direction: column; gap: 10px; }
.ctools button { width: 27px; height: 26px; background: #fff; border: 1px solid #b5b5b5; }

.vsb { flex: 0 0 20px; display: flex; flex-direction: column; align-items: center; padding: 3px 0 0; border-right: 1px solid #c9c9c9; }
.vsb button, .hsb button { width: 15px; height: 14px; background: #fff; border: 1px solid #b5b5b5; flex: none; }
.track { background: #d9d9d9; flex: 1; display: flex; }
.vsb .track { width: 15px; flex-direction: column; }
.hsb { display: flex; align-items: center; flex: none; }
.hsb .track { height: 14px; }
.thumb { background: #fff; border: 1px solid #b0b0b0; }
.vt1 { height: 246px; margin-top: 139px; }
.vt2 { height: 69%; }
.ht1 { width: 74%; }
.ht2 { width: 90%; }

.sheettabs { flex: none; height: 26px; display: flex; align-items: stretch; border-top: 1px solid #a5a5a5; border-bottom: 1px solid #cfcfcf; padding-left: 14px; color: #555; font-size: 12px; }
.nav { width: 27px; }
.nav + .tab { margin-left: 26px; }
.tab { width: 33px; }
.tab:not(.cur) { border-right: 1px solid #999; margin: 3px 0; }
.tab.narrow { width: 29px; }
.cur { width: 82px; background: #fff; color: #217346; font-weight: 700; border: 1px solid #a5a5a5; border-width: 0 1px; border-bottom: 2px solid #217346; margin-top: -1px; margin-bottom: 2px; padding-top: 4px; }
.add { margin-left: 29px; }
.split { margin-left: auto; align-self: center; }
.sheettabs .hsb { width: 374px; margin-right: 19px; }

/* Format pane */
.pane { flex: 0 0 262px; min-width: 0; display: flex; flex-direction: column; padding: 12px 9px 16px 13px; background: #e6e6e6; min-height: 0; color: #333; }
.ptitle { display: flex; align-items: center; height: 28px; }
.ptitle h2 { margin: 0; font-size: 19px; line-height: 28px; font-weight: 400; color: #217346; opacity: .85; white-space: nowrap; width: 188px; }
.ptitle .caret { margin-bottom: 5px; }
.px { margin: 0 3px 7px auto; }
.psub { align-self: flex-start; margin: 8px 0 0 4px; font-weight: 600; gap: 3px; }
.picons { display: flex; align-items: center; gap: 15px; height: 42px; padding-left: 5px; margin-top: 3px; }
.notch { width: 100%; height: 8px; margin-top: -1px; }
.pbody { flex: 1; display: flex; min-height: 0; padding-top: 5px; }
.opts { flex: 1; min-width: 0; overflow: hidden; padding-left: 6px; }
.opts h3 { margin: 2px 0 8px; font-size: 11px; line-height: 15px; font-weight: 600; color: #217346; display: flex; align-items: center; gap: 8px; white-space: nowrap; }
.fold { border: 3px solid transparent; border-right-color: #333; border-bottom-color: #333; }
.opt { height: 33px; display: flex; align-items: center; padding-left: 17px; gap: 11px; position: relative; }
.opt > svg:first-child { width: 26px; height: 23px; }
.cv { fill: none; stroke: #eda56c; stroke-width: 1px; }
.opts label { display: inline-flex; align-items: center; gap: 4px; white-space: nowrap; }
.opts label > span { line-height: 15px; }
input[type=radio] { appearance: none; flex: none; width: 12px; height: 12px; border: 1px solid #999; border-radius: 50%; background: #fff; }
input[type=radio]:checked { background: radial-gradient(#555 0 3px, #fff 3px); }
.opts .deg { position: absolute; left: 151px; top: 7px; width: 75px; justify-content: space-between; color: #a0a0a0; }
.deg input { width: 26px; height: 19px; background: #ededea; padding: 0 6px; color: #777; }
.cursor { position: absolute; left: 26px; top: 13px; }
.nm { margin: 5px 0 11px 14px; white-space: nowrap; }
.opt2 { display: flex; align-items: center; height: 20px; padding-left: 24px; }
.opt2 label { flex: 0 0 127px; }
.opt2 .val { flex: 1; min-width: 0; height: 16px; background: #ededea; white-space: nowrap; }
.opt2 span.val { background: none; }
.ex { margin: 6px 0 0 14px; }
.vsb.pv { flex: 0 0 15px; padding: 0; border: 0; margin-top: 1px; }
.ph { width: 226px; margin-top: 1px; margin-bottom: 1px; }

/* Status bar */
.status { flex: none; height: 21px; background: #f2f2f2; display: flex; align-items: center; color: #333; }
.ready { flex: 1; padding-left: 8px; }
.view { width: 36px; height: 21px; }
.view.on { background: #c6c6c6; }
.zb { font-size: 15px; width: 12px; color: #444; }
.zoom { appearance: none; width: 94px; height: 12px; background: linear-gradient(#aaa, #aaa) center / 100% 1px no-repeat; margin: 0; }
.zoom::-webkit-slider-thumb { appearance: none; width: 5px; height: 11px; background: #666; }
.pct { width: 36px; padding: 0 2px 0 0; text-align: right; }

/* Taskbar */
.taskbar { flex: none; height: 36px; background: #020308; display: flex; color: #fff; }
.taskbar > button { width: 46px; }
.taskbar .act { background: #34363c; }
.tray { margin-left: auto; display: flex; align-items: center; gap: 9px; padding-right: 9px; }
.people { margin-right: 12px; }
.lang { margin-left: 3px; }
.clock { text-align: center; width: 62px; white-space: nowrap; line-height: 16px; }
.note { position: relative; width: 26px; height: 30px; }
.note b { position: absolute; right: -3px; bottom: 0; width: 15px; height: 15px; border-radius: 50%; background: #333; border: 1px solid #777; font-size: 11px; line-height: 13px; text-align: center; }
```
